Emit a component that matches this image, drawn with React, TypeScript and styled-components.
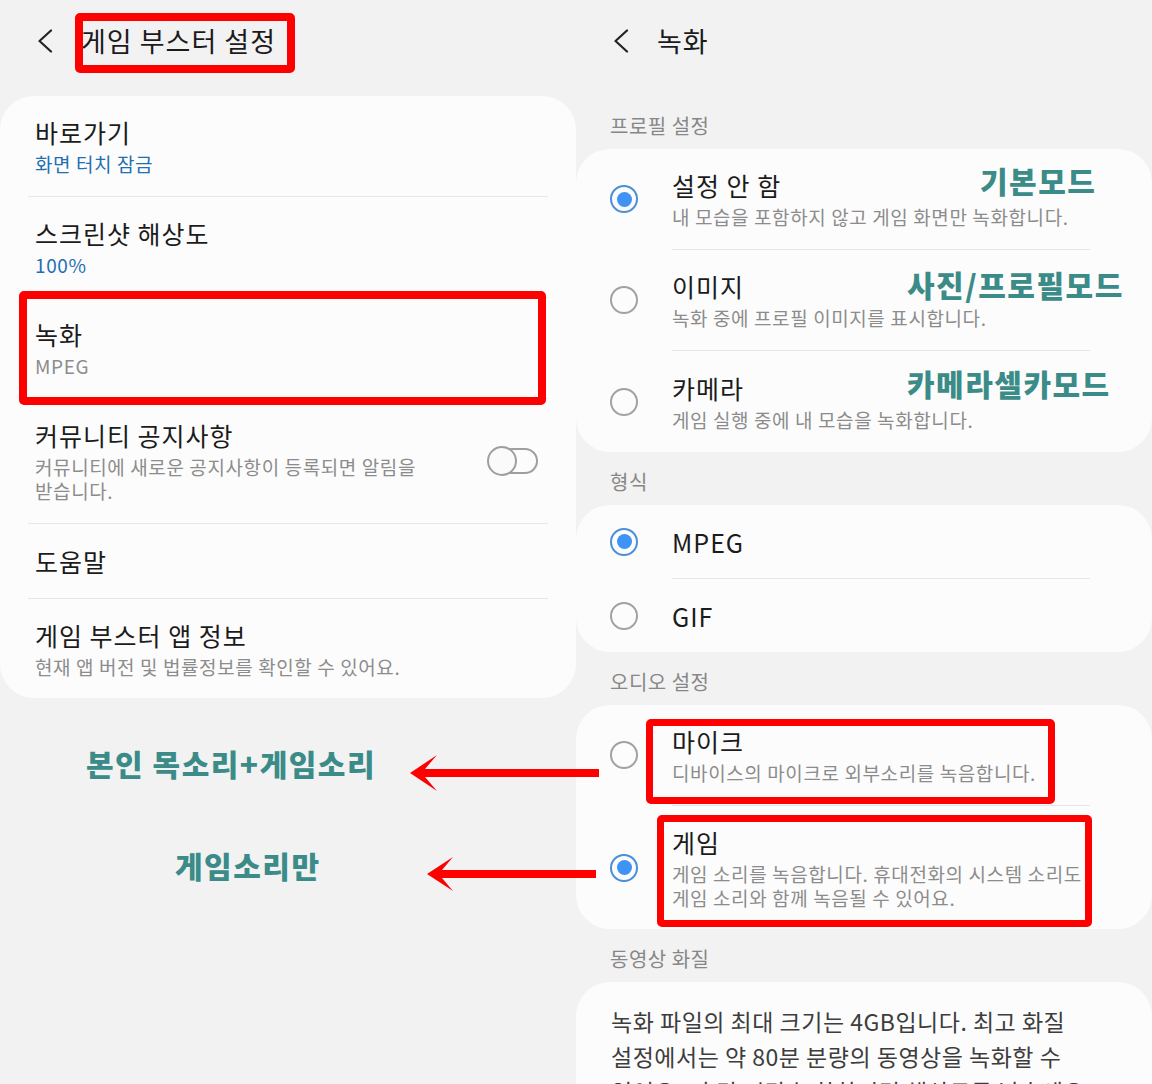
import React from 'react';
import styled, { createGlobalStyle } from 'styled-components';

type Tone = 'blue' | 'gray';

const leftItems: { title: string; sub?: string; tone?: Tone; h: number; toggle?: boolean }[] = [
  { title: '바로가기', sub: '화면 터치 잠금', tone: 'blue', h: 100 },
  { title: '스크린샷 해상도', sub: '100%', tone: 'blue', h: 100 },
  { title: '녹화', sub: 'MPEG', tone: 'gray', h: 100 },
  { title: '커뮤니티 공지사항', sub: '커뮤니티에 새로운 공지사항이 등록되면 알림을 받습니다.', tone: 'gray', h: 124, toggle: true },
  { title: '도움말', h: 74 },
  { title: '게임 부스터 앱 정보', sub: '현재 앱 버전 및 법률정보를 확인할 수 있어요.', tone: 'gray', h: 99 },
];

type Option = { title: string; sub?: string; checked?: boolean; h: number; note?: string; noteX?: number; noteY?: number };

const sections: { label: string; rows: Option[] }[] = [
  {
    label: '프로필 설정',
    rows: [
      { title: '설정 안 함', sub: '내 모습을 포함하지 않고 게임 화면만 녹화합니다.', checked: true, h: 100, note: '기본모드', noteX: 404, noteY: 13 },
      { title: '이미지', sub: '녹화 중에 프로필 이미지를 표시합니다.', h: 100, note: '사진/프로필모드', noteX: 331, noteY: 16 },
      { title: '카메라', sub: '게임 실행 중에 내 모습을 녹화합니다.', h: 101, note: '카메라셀카모드', noteX: 331, noteY: 14 },
    ],
  },
  {
    label: '형식',
    rows: [
      { title: 'MPEG', checked: true, h: 73 },
      { title: 'GIF', h: 73 },
    ],
  },
  {
    label: '오디오 설정',
    rows: [
      { title: '마이크', sub: '디바이스의 마이크로 외부소리를 녹음합니다.', h: 100 },
      { title: '게임', sub: '게임 소리를 녹음합니다. 휴대전화의 시스템 소리도 게임 소리와 함께 녹음될 수 있어요.', checked: true, h: 123 },
    ],
  },
];

const Back = () => (
  <svg width="16" height="24" viewBox="0 0 16 24">
    <polyline points="14,1.5 2.5,12 14,22.5" fill="none" stroke="#222" strokeWidth="2.2" strokeLinecap="round" strokeLinejoin="round" />
  </svg>
);

export default function App() {
  return (
    <Screen>
      <GlobalStyle />
      <Column>
        <Header>
          <Back />
          <HeaderTitle>게임 부스터 설정</HeaderTitle>
        </Header>
        <Card>
          {leftItems.map((item, i) => (
            <React.Fragment key={item.title}>
              {i > 0 && <Divider $left={28} $right={28} />}
              <MenuRow $h={item.h}>
                <TextBlock $max={item.toggle ? 390 : undefined}>
                  <Title>{item.title}</Title>
                  {item.sub && <Sub $tone={item.tone}>{item.sub}</Sub>}
                </TextBlock>
                {item.toggle && (
                  <Toggle>
                    <Track />
                    <Thumb />
                  </Toggle>
                )}
              </MenuRow>
            </React.Fragment>
          ))}
        </Card>
        <Notes>
          <NoteLeft $indent={86}>본인 목소리+게임소리</NoteLeft>
          <NoteLeft $indent={175}>게임소리만</NoteLeft>
        </Notes>
      </Column>

      <Column>
        <Header>
          <Back />
          <HeaderTitle>녹화</HeaderTitle>
        </Header>
        {sections.map(section => (
          <React.Fragment key={section.label}>
            <SectionLabel>{section.label}</SectionLabel>
            <Card>
              {section.rows.map((row, i) => (
                <React.Fragment key={row.title}>
                  {i > 0 && <Divider $left={96} $right={62} />}
                  <OptionRow $h={row.h}>
                    <Radio $checked={!!row.checked} />
                    <TextBlock $max={420}>
                      <Title>{row.title}</Title>
                      {row.sub && <Sub $tone="gray">{row.sub}</Sub>}
                    </TextBlock>
                    {row.note && (
                      <NoteRight $x={row.noteX ?? 0} $y={row.noteY ?? 0}>{row.note}</NoteRight>
                    )}
                  </OptionRow>
                </React.Fragment>
              ))}
            </Card>
          </React.Fragment>
        ))}
        <SectionLabel>동영상 화질</SectionLabel>
        <InfoCard>
          녹화 파일의 최대 크기는 4GB입니다. 최고 화질 설정에서는 약 80분 분량의 동영상을 녹화할 수 있어요. 더 긴 시간 녹화하려면 해상도를 낮추세요.
        </InfoCard>
      </Column>

      <RedBox $x={75} $y={13} $w={220} $h={60} $b={8} />
      <RedBox $x={19} $y={291} $w={527} $h={114} $b={8} />
      <RedBox $x={646} $y={719} $w={409} $h={85} $b={7} />
      <RedBox $x={657} $y={815} $w={435} $h={112} $b={7} />

      <Arrows width="1152" height="1084" viewBox="0 0 1152 1084">
        <polygon points="410,773 437,755 425,769 599,769 599,777 425,777 437,791" fill="#ff0000" />
        <polygon points="427,874 453,857 442,870 596,870 596,878 442,878 453,891" fill="#ff0000" />
      </Arrows>
    </Screen>
  );
}

const GlobalStyle = createGlobalStyle`
  html, body {
    margin: 0;
    padding: 0;
    background: #f2f2f2;
  }
  body {
    font-family: "Noto Sans CJK KR", "Noto Sans", sans-serif;
    color: #1b1b1b;
    word-break: keep-all;
  }
`;

const Screen = styled.div`
  position: relative;
  width: 1152px;
  height: 1084px;
  overflow: hidden;
  display: grid;
  grid-template-columns: 576px 576px;
  align-items: start;
  background: #f2f2f2;
`;

const Column = styled.div`
  display: flex;
  flex-direction: column;
`;

const Header = styled.div`
  height: 96px;
  box-sizing: border-box;
  padding: 0 0 14px 37px;
  display: flex;
  align-items: center;
  gap: 28px;
`;

const HeaderTitle = styled.div`
  font-size: 27px;
  line-height: 34px;
  letter-spacing: 1px;
  color: #1b1b1b;
`;

const Card = styled.div`
  background: #fcfcfc;
  border-radius: 34px;
  display: flex;
  flex-direction: column;
`;

const Divider = styled.div<{ $left: number; $right: number }>`
  height: 1px;
  background: #e6e6e6;
  margin: 0 ${p => p.$right}px 0 ${p => p.$left}px;
`;

const MenuRow = styled.div<{ $h: number }>`
  height: ${p => p.$h}px;
  box-sizing: border-box;
  padding: 0 38px 0 35px;
  display: flex;
  align-items: center;
  justify-content: space-between;
`;

const OptionRow = styled.div<{ $h: number }>`
  position: relative;
  height: ${p => p.$h}px;
  box-sizing: border-box;
  padding-left: 34px;
  display: flex;
  align-items: center;
  gap: 34px;
`;

const TextBlock = styled.div<{ $max?: number }>`
  display: flex;
  flex-direction: column;
  gap: 4px;
  max-width: ${p => (p.$max ? `${p.$max}px` : 'none')};
`;

const Title = styled.div`
  font-size: 25px;
  line-height: 32px;
  letter-spacing: 1px;
  color: #1b1b1b;
`;

const Sub = styled.div<{ $tone?: Tone }>`
  font-size: 19px;
  line-height: 24px;
  letter-spacing: 0.6px;
  color: ${p => (p.$tone === 'blue' ? '#1f6fb2' : '#8c8c8c')};
`;

const Toggle = styled.div`
  position: relative;
  width: 51px;
  height: 30px;
  flex-shrink: 0;
`;

const Track = styled.div`
  position: absolute;
  left: 12px;
  right: 0;
  top: 2px;
  bottom: 2px;
  box-sizing: border-box;
  border: 2px solid #9e9e9e;
  border-radius: 13px;
`;

const Thumb = styled.div`
  position: absolute;
  left: 0;
  top: 0;
  width: 30px;
  height: 30px;
  box-sizing: border-box;
  border-radius: 50%;
  border: 2px solid #9e9e9e;
  background: #fafafa;
`;

const Radio = styled.div<{ $checked: boolean }>`
  width: 28px;
  height: 28px;
  flex-shrink: 0;
  box-sizing: border-box;
  border-radius: 50%;
  border: 2px solid ${p => (p.$checked ? '#4a8fd8' : '#a2a2a2')};
  display: flex;
  align-items: center;
  justify-content: center;
  &::after {
    content: '';
    display: ${p => (p.$checked ? 'block' : 'none')};
    width: 15px;
    height: 15px;
    border-radius: 50%;
    background: #3f93f5;
  }
`;

const SectionLabel = styled.div`
  padding: 17px 0 10px 34px;
  font-size: 20px;
  line-height: 26px;
  letter-spacing: 0.5px;
  color: #878787;
`;

const InfoCard = styled.div`
  background: #fcfcfc;
  border-radius: 34px;
  padding: 22px 40px 40px 35px;
  font-size: 23px;
  line-height: 35px;
  letter-spacing: 0.5px;
  color: #3d3d3d;
`;

const Notes = styled.div`
  display: flex;
  flex-direction: column;
  gap: 62px;
  padding-top: 45px;
`;

const NoteLeft = styled.div<{ $indent: number }>`
  margin-left: ${p => p.$indent}px;
  font-size: 30px;
  line-height: 40px;
  letter-spacing: 1.5px;
  font-weight: 900;
  color: #3b8b89;
`;

const NoteRight = styled.div<{ $x: number; $y: number }>`
  position: absolute;
  left: ${p => p.$x}px;
  top: ${p => p.$y}px;
  font-size: 30px;
  line-height: 36px;
  letter-spacing: 1.5px;
  font-weight: 900;
  color: #3b8b89;
  white-space: nowrap;
`;

const RedBox = styled.div<{ $x: number; $y: number; $w: number; $h: number; $b: number }>`
  position: absolute;
  left: ${p => p.$x}px;
  top: ${p => p.$y}px;
  width: ${p => p.$w}px;
  height: ${p => p.$h}px;
  box-sizing: border-box;
  border: ${p => p.$b}px solid #ff0000;
  border-radius: 5px;
  pointer-events: none;
`;

const Arrows = styled.svg`
  position: absolute;
  left: 0;
  top: 0;
  pointer-events: none;
`;
